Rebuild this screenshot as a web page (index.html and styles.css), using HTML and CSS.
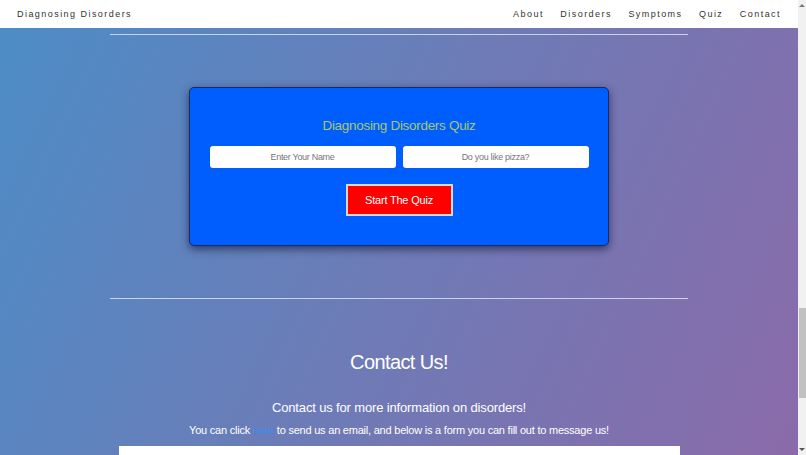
FILE: index.html
```html
<!DOCTYPE html>
<html lang="en">
  <head>
    <meta charset="UTF-8" />
    <meta name="viewport" content="width=device-width, initial-scale=1.0" />
    <title>Diagnosing Disorders</title>
    <link rel="stylesheet" href="styles.css">
  </head>
  <body>
    <div class="page">
      <header class="top-bar">
        <a class="brand" href="#">Diagnosing Disorders</a>
        <nav class="nav-links">
          <a href="#">About</a>
          <a href="#">Disorders</a>
          <a href="#">Symptoms</a>
          <a href="#">Quiz</a>
          <a href="#">Contact</a>
        </nav>
      </header>

      <hr class="divider first" />

      <section class="quiz-box">
        <h2>Diagnosing Disorders Quiz</h2>
        <div class="quiz-fields">
          <input type="text" name="name" placeholder="Enter Your Name" />
          <input type="text" name="pizza" placeholder="Do you like pizza?" />
        </div>
        <button class="quiz-start">Start The Quiz</button>
      </section>

      <hr class="divider" />

      <section class="contact">
        <h1>Contact Us!</h1>
        <h3>Contact us for more information on disorders!</h3>
        <p>You can click <a href="#">here</a> to send us an email, and below is a form you can fill out to message us!</p>
        <div class="contact-form"></div>
      </section>
    </div>

    <div class="scrollbar">
      <span class="arrow up"></span>
      <span class="thumb"></span>
      <span class="arrow down"></span>
    </div>
  </body>
</html>
```

FILE: styles.css
```css
* {
  box-sizing: border-box;
}

html, body {
  height: 100%;
}

body {
  margin: 0;
  display: flex;
  overflow: hidden;
  font-family: "Liberation Sans", Arial, sans-serif;
  color: #fff;
  background: linear-gradient(115deg, #4c8dc7 0%, #6a7db8 45%, #8b6aa9 100%);
}

a {
  text-decoration: none;
}

.page {
  flex: 1;
  height: 100%;
  overflow: hidden;
}

/* header */
.top-bar {
  height: 28px;
  background-color: #fff;
  display: flex;
  align-items: center;
  justify-content: space-between;
  padding: 0 17px 0 17px;
  font-size: 9px;
  letter-spacing: 1.45px;
}

.top-bar a {
  color: #333;
}

.nav-links {
  display: flex;
  gap: 16.5px;
}

.divider {
  width: 578px;
  margin: 6px auto 0;
  border: 0;
  border-top: 1px solid #c9d3ee;
}

/* quiz */
.quiz-box {
  width: 420px;
  height: 159px;
  margin: 52px auto 0;
  background-color: #005eff;
  border: 1px solid #152a66;
  border-radius: 5px;
  box-shadow: 0 3px 8px rgba(20, 25, 60, 0.7);
  display: flex;
  flex-direction: column;
  align-items: center;
  padding-top: 30px;
}

.quiz-box h2 {
  margin: 0;
  font-size: 13.5px;
  letter-spacing: -0.3px;
  font-weight: normal;
  color: #a8c86b;
}

.quiz-fields {
  display: flex;
  gap: 7px;
  margin-top: 13px;
}

.quiz-fields input {
  width: 186px;
  height: 22px;
  border: 0;
  border-radius: 3px;
  text-align: center;
  font-family: inherit;
  font-size: 9px;
  letter-spacing: -0.3px;
}

.quiz-fields input::placeholder {
  color: #777;
}

.quiz-start {
  margin-top: 16px;
  width: 107px;
  height: 32px;
  background-color: #ff0000;
  border: 2px solid #d8d8d8;
  color: #fff;
  font-family: inherit;
  font-size: 11px;
  letter-spacing: -0.2px;
}

.quiz-box + .divider {
  margin-top: 52px;
}

/* contact */
.contact {
  display: flex;
  flex-direction: column;
  align-items: center;
  text-align: center;
}

.contact h1 {
  margin: 52px 0 0;
  font-size: 20px;
  letter-spacing: -0.6px;
  font-weight: normal;
}

.contact h3 {
  margin: 26px 0 0;
  font-size: 13px;
  letter-spacing: -0.15px;
  font-weight: normal;
}

.contact p {
  margin: 9px 0 0;
  font-size: 11px;
  letter-spacing: -0.22px;
}

.contact p a {
  color: #3d8cf0;
}

.contact-form {
  width: 561px;
  height: 40px;
  margin-top: 10px;
  background-color: #fff;
}

/* fake scrollbar */
.scrollbar {
  width: 8px;
  height: 100%;
  background-color: #f1f1f1;
  position: relative;
}

.thumb {
  position: absolute;
  top: 308px;
  left: 1px;
  width: 7px;
  height: 90px;
  background-color: #c1c1c1;
}

.arrow {
  position: absolute;
  left: 1px;
  width: 0;
  height: 0;
  border-left: 3px solid transparent;
  border-right: 3px solid transparent;
}

.arrow.up {
  top: 4px;
  border-bottom: 3px solid #777;
}

.arrow.down {
  bottom: 4px;
  border-top: 3px solid #555;
}
```
